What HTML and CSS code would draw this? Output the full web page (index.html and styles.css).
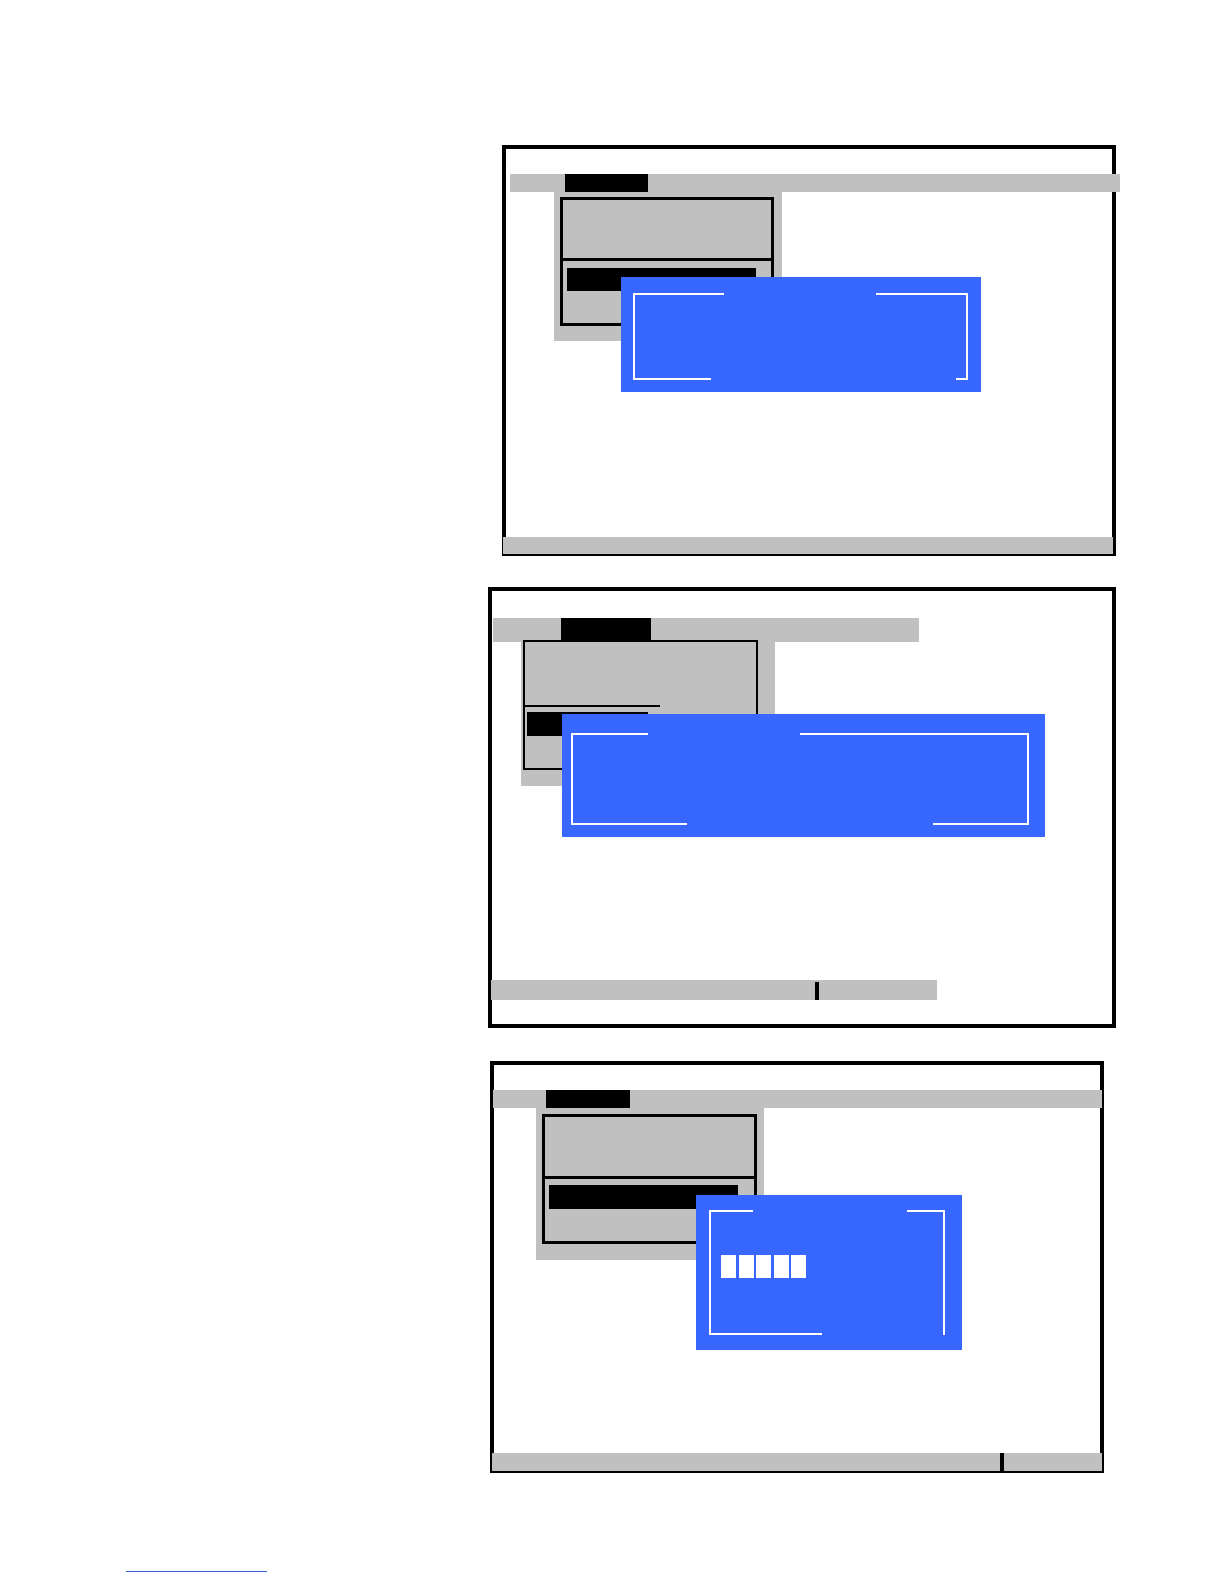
FILE: index.html
```html
<!DOCTYPE html>
<html lang="en">
<head>
<meta charset="utf-8">
<title>Setup screens</title>
<link rel="stylesheet" href="styles.css">
</head>
<body>
<main class="page">
  <section class="screen s1">
    <div class="menubar"><div class="tab"></div></div>
    <div class="screen-body"></div>
    <div class="statusbar"></div>
    <div class="dropdown">
      <div class="menu-box">
        <div class="menu-upper"></div>
        <div class="menu-divider"></div>
        <div class="menu-lower"><div class="highlight"></div></div>
      </div>
    </div>
    <div class="dialog">
      <div class="frame">
        <div class="frame-top"><span class="seg tl"></span><span class="seg tr"></span></div>
        <div class="frame-mid"></div>
        <div class="frame-bottom"><span class="seg bl"></span><span class="seg br"></span></div>
      </div>
    </div>
  </section>

  <section class="screen s2">
    <div class="menubar"><div class="tab"></div></div>
    <div class="screen-body"></div>
    <div class="statusbar"><span class="tick"></span></div>
    <div class="dropdown">
      <div class="menu-box">
        <div class="menu-upper"></div>
        <div class="menu-divider"></div>
        <div class="menu-lower"><div class="highlight"></div></div>
      </div>
    </div>
    <div class="dialog">
      <div class="frame">
        <div class="frame-top"><span class="seg tl"></span><span class="seg tr"></span></div>
        <div class="frame-mid"></div>
        <div class="frame-bottom"><span class="seg bl"></span><span class="seg br"></span></div>
      </div>
    </div>
  </section>

  <section class="screen s3">
    <div class="menubar"><div class="tab"></div></div>
    <div class="screen-body"></div>
    <div class="statusbar"><span class="tick"></span></div>
    <div class="dropdown">
      <div class="menu-box">
        <div class="menu-upper"></div>
        <div class="menu-divider"></div>
        <div class="menu-lower"><div class="highlight"></div></div>
      </div>
    </div>
    <div class="dialog">
      <div class="frame">
        <div class="frame-top"><span class="seg tl"></span><span class="seg tr"></span></div>
        <div class="frame-mid">
          <div class="blocks"><span></span><span></span><span></span><span></span><span></span></div>
        </div>
        <div class="frame-bottom"><span class="seg bl"></span></div>
      </div>
    </div>
  </section>

  <a class="footer-link" href="#"></a>
</main>
</body>
</html>
```

FILE: styles.css
```css
* { box-sizing: border-box; }

html, body {
  margin: 0;
  padding: 0;
  background: #ffffff;
  font-family: "Liberation Sans", Arial, sans-serif;
}

.page {
  width: 1224px;
  min-height: 1584px;
  padding-top: 145px;
  display: flex;
  flex-direction: column;
  align-items: flex-start;
}

.screen {
  position: relative;
  border: 4px solid #000;
  background: #fff;
  display: flex;
  flex-direction: column;
}

.menubar {
  background: #c0c0c0;
  display: flex;
}

.tab { background: #000; }

.screen-body { flex: 1; }

.statusbar {
  position: relative;
  background: #c0c0c0;
}

.tick {
  position: absolute;
  background: #000;
  width: 4px;
}

.dropdown {
  position: absolute;
  background: #c0c0c0;
}

.menu-box {
  position: absolute;
  border: 3px solid #000;
  display: flex;
  flex-direction: column;
}

.menu-upper { flex: none; }
.menu-divider { background: #000; height: 3px; flex: none; }
.menu-lower { flex: 1; }
.highlight { background: #000; }

.dialog {
  position: absolute;
  background: #3767ff;
}

.frame {
  position: absolute;
  display: flex;
  flex-direction: column;
  border-left: 2px solid #fff;
  border-right: 2px solid #fff;
}

.frame-top, .frame-bottom {
  display: flex;
  justify-content: space-between;
  height: 2px;
  flex: none;
}

.frame-mid { flex: 1; }

.seg { display: block; height: 2px; background: #fff; }

/* ---------- screen 1 ---------- */
.s1 { margin-left: 502px; width: 614px; height: 411px; }
.s1 .menubar { margin: 25px -8px 0 4px; height: 18px; }
.s1 .tab { margin-left: 55px; width: 83px; height: 19px; }
.s1 .statusbar { margin: 0 -1px -2px -3px; height: 17px; }
.s1 .dropdown { left: 48px; top: 43px; width: 228px; height: 149px; }
.s1 .menu-box { left: 6px; top: 5px; width: 214px; height: 129px; }
.s1 .menu-upper { height: 58px; }
.s1 .highlight { margin: 7px 0 0 4px; width: 189px; height: 23px; }
.s1 .dialog { left: 115px; top: 128px; width: 360px; height: 115px; }
.s1 .frame { left: 12px; top: 16px; width: 335px; height: 87px; }
.s1 .tl { width: 91px; margin-left: -2px; }
.s1 .tr { width: 92px; margin-right: -2px; }
.s1 .bl { width: 78px; margin-left: -2px; }
.s1 .br { width: 12px; margin-right: -2px; }

/* ---------- screen 2 ---------- */
.s2 { margin-top: 31px; margin-left: 488px; width: 628px; height: 441px; }
.s2 .menubar { margin: 27px 0 0 1px; width: 426px; height: 24px; }
.s2 .tab { margin-left: 68px; width: 90px; height: 24px; }
.s2 .statusbar { margin: 0 0 24px -1px; width: 446px; height: 20px; }
.s2 .tick { left: 324px; top: 2px; height: 18px; }
.s2 .dropdown { left: 29px; top: 51px; width: 254px; height: 144px; }
.s2 .menu-box { left: 2px; top: -2px; width: 235px; height: 130px; border-width: 2px; }
.s2 .menu-upper { height: 63px; }
.s2 .menu-divider { width: 135px; height: 2px; }
.s2 .highlight { margin: 5px 0 0 2px; width: 121px; height: 24px; }
.s2 .dialog { left: 70px; top: 123px; width: 483px; height: 123px; }
.s2 .frame { left: 9px; top: 19px; width: 458px; height: 92px; }
.s2 .tl { width: 77px; margin-left: -2px; }
.s2 .tr { width: 229px; margin-right: -2px; }
.s2 .bl { width: 116px; margin-left: -2px; }
.s2 .br { width: 96px; margin-right: -2px; }

/* ---------- screen 3 ---------- */
.s3 { margin-top: 33px; margin-left: 490px; width: 614px; height: 412px; }
.s3 .menubar { margin: 25px -2px 0 -1px; height: 18px; }
.s3 .tab { margin-left: 53px; width: 84px; height: 19px; }
.s3 .statusbar { margin: 0 -2px -2px -2px; height: 18px; }
.s3 .tick { left: 508px; top: 0; height: 18px; }
.s3 .dropdown { left: 42px; top: 43px; width: 228px; height: 152px; }
.s3 .menu-box { left: 6px; top: 6px; width: 215px; height: 130px; }
.s3 .menu-upper { height: 59px; }
.s3 .highlight { margin: 6px 0 0 4px; width: 189px; height: 24px; }
.s3 .dialog { left: 202px; top: 130px; width: 266px; height: 155px; }
.s3 .frame { left: 13px; top: 15px; width: 236px; height: 125px; }
.s3 .tl { width: 44px; margin-left: -2px; }
.s3 .tr { width: 38px; margin-right: -2px; }
.s3 .bl { width: 113px; margin-left: -2px; }

.blocks {
  display: flex;
  gap: 2.5px;
  margin: 43px 0 0 10px;
}

.blocks span {
  display: block;
  width: 15px;
  height: 23px;
  background: #fff;
}

/* ---------- footer ---------- */
.footer-link {
  display: block;
  margin-top: 98px;
  margin-left: 126px;
  width: 141px;
  height: 1px;
  background: #3a5fd8;
}
```
